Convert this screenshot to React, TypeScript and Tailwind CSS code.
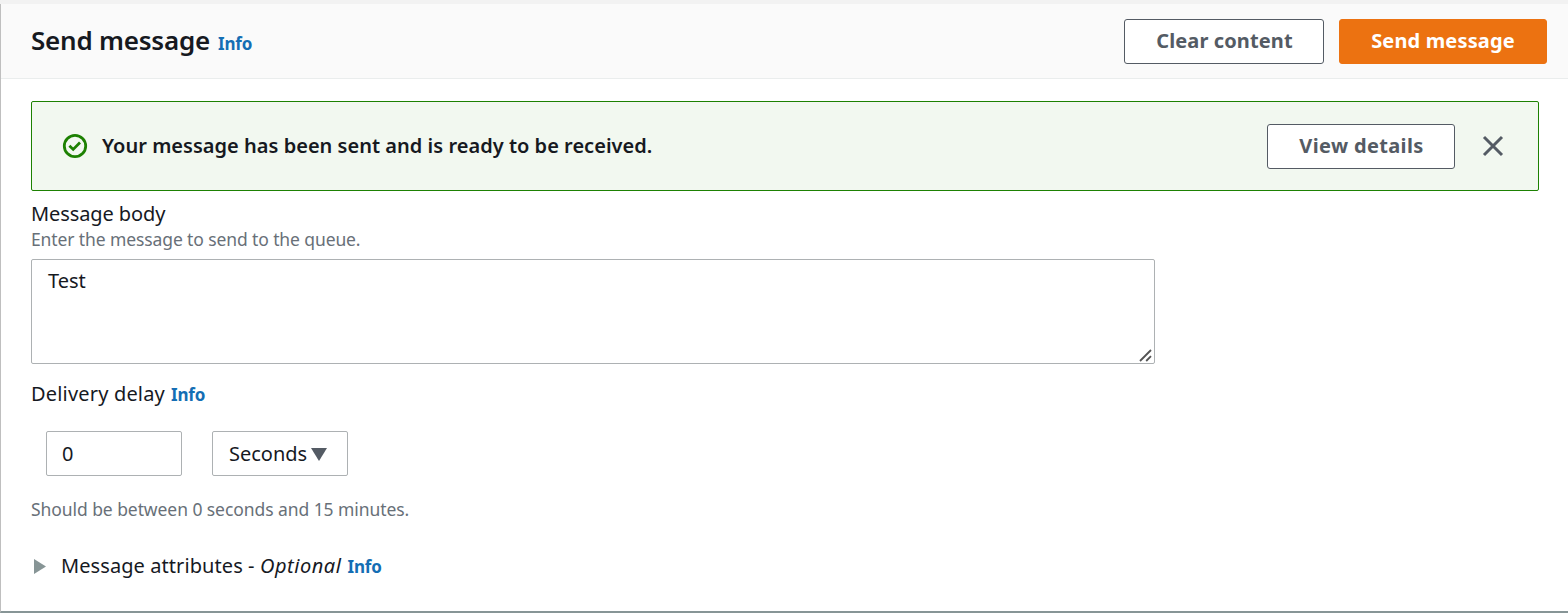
import { useState } from "react";

function Info({ className = "" }: { className?: string }) {
  return (
    <a href="#" className={`text-[17px] font-bold tracking-[-0.2px] text-[#146eb4] ${className}`}>
      Info
    </a>
  );
}

function Button({ label, className }: { label: string; className: string }) {
  return (
    <button
      type="button"
      className={`flex h-[45px] shrink-0 items-center justify-center rounded-[3px] border text-[20px] font-bold whitespace-nowrap ${className}`}
    >
      <span>{label}</span>
    </button>
  );
}

function SuccessIcon() {
  return (
    <svg className="size-[26px] shrink-0" viewBox="0 0 26 26" fill="none" stroke="#1d8102">
      <circle cx="13" cy="13" r="10.7" strokeWidth="2.8" />
      <path d="M7.4 12.7l3.8 3.7 6.8-6.8" strokeWidth="2.8" />
    </svg>
  );
}

export default function App() {
  const [body, setBody] = useState("Test");
  const [delay, setDelay] = useState("0");

  return (
    <div className="h-[613px] w-full overflow-hidden bg-[#f2f2f2] pt-[4px] font-['Noto_Sans',sans-serif] text-[20px] text-[#16191f]">
      <section className="flex h-[609px] flex-col border-b-2 border-l border-b-[#879596] border-l-[#bfbfbf] bg-white">
        <header className="flex h-[75px] shrink-0 items-center justify-between border-b border-[#eaeded] bg-[#fafafa] pr-[21px] pl-[30px]">
          <div className="flex items-baseline pb-[2px]">
            <h1 className="text-[26px] leading-[36px] font-[650] tracking-[-0.22px]">Send message</h1>
            <Info className="ml-[8px]" />
          </div>
          <div className="flex gap-[15px]">
            <Button label="Clear content" className="w-[200px] border-[#545b64] bg-white pl-px tracking-[0.12px] text-[#545b64]" />
            <Button label="Send message" className="w-[208px] border-[#ec7211] bg-[#ec7211] tracking-[0.15px] text-white" />
          </div>
        </header>

        <div className="flex flex-col pt-[22px] pr-[29px] pl-[30px]">
          <div className="flex h-[90px] items-center rounded-[2px] border border-[#1d8102] bg-[#f2f8f0] pr-[34px] pl-[30px]">
            <SuccessIcon />
            <p className="ml-[14px] flex-1 font-semibold tracking-[0.02px] whitespace-nowrap">
              <span>Your message has been sent and is ready to be received.</span>
            </p>
            <Button label="View details" className="w-[188px] border-[#545b64] bg-white pl-px tracking-[0.35px] text-[#545b64]" />
            <button type="button" aria-label="Dismiss" className="ml-[27px]">
              <svg className="size-[22px]" viewBox="0 0 22 22" fill="none" stroke="#545b64" strokeWidth="3">
                <path d="M2 2l18 18M20 2L2 20" />
              </svg>
            </button>
          </div>

          <label htmlFor="body" className="mt-[9px] h-[28px] leading-[28px] tracking-[-0.1px]">
            <span>Message body</span>
          </label>
          <p className="-mt-px h-[24px] text-[17.5px] leading-[24px] tracking-[-0.11px] text-[#687078]">
            <span>Enter the message to send to the queue.</span>
          </p>
          <div className="mt-[8px] grid h-[105px] w-[1124px]">
            <textarea
              id="body"
              value={body}
              onChange={(e) => setBody(e.target.value)}
              className="col-start-1 row-start-1 resize-none rounded-[2px] border border-[#adb1b3] px-[16px] py-[7px] leading-[28px] outline-none"
            />
            <svg
              className="pointer-events-none col-start-1 row-start-1 mr-[3px] mb-[2px] size-[13px] self-end justify-self-end"
              viewBox="0 0 13 13"
              fill="none"
              stroke="#545454"
              strokeWidth="1.8"
            >
              <path d="M1 12L12 1M7.2 12L12 7.2" />
            </svg>
          </div>

          <div className="mt-[16px] flex h-[28px] items-baseline leading-[28px]">
            <label htmlFor="delay" className="tracking-[0.18px]">Delivery delay</label>
            <Info className="ml-[6px]" />
          </div>
          <div className="mt-[23px] flex gap-[30px] pl-[15px]">
            <input
              id="delay"
              value={delay}
              onChange={(e) => setDelay(e.target.value)}
              className="h-[45px] w-[136px] rounded-[2px] border border-[#adb1b3] px-[15px] outline-none"
            />
            <button type="button" className="flex h-[45px] w-[136px] items-center rounded-[2px] border border-[#adb1b3] pl-[16px]">
              <span>Seconds</span>
              <svg className="mt-px ml-[4px] h-[13px] w-[16px]" viewBox="0 0 16 13" fill="#545b64">
                <path d="M0 0h16L8 13z" />
              </svg>
            </button>
          </div>
          <p className="mt-[21px] h-[24px] text-[17.5px] leading-[24px] tracking-[-0.07px] text-[#687078]">
            <span>Should be between 0 seconds and 15 minutes.</span>
          </p>

          <div className="mt-[31px] flex h-[28px] items-center leading-[28px]">
            <svg className="mr-[15px] ml-[3px] h-[15px] w-[12px]" viewBox="0 0 12 15" fill="#879596">
              <path d="M0 0l12 7.5L0 15z" />
            </svg>
            <div className="flex items-baseline whitespace-pre">
              <span className="tracking-[0.08px]">Message attributes - </span>
              <span className="tracking-[0.55px] italic">Optional</span>
              <Info className="ml-[6px]" />
            </div>
          </div>
        </div>
      </section>
    </div>
  );
}
